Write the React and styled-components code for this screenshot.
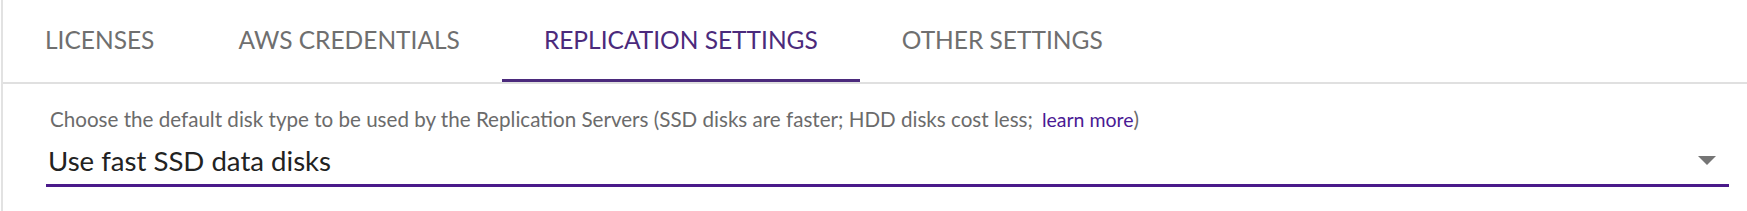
import React from "react";
import styled, { createGlobalStyle } from "styled-components";

const Global = createGlobalStyle`
  html, body { margin: 0; padding: 0; background: #fff; }
  body { font-family: Lato, "Open Sans", sans-serif; }
`;

const Frame = styled.div`
  margin-left: 1px;
  border-left: 2px solid #e2e2e2;
  height: 211px;
  box-sizing: border-box;
`;

const TabBar = styled.nav`
  display: flex;
  height: 84px;
  box-sizing: border-box;
  border-bottom: 2px solid #e0e0e0;
`;

const Tab = styled.div`
  display: flex;
  align-items: center;
  padding: 0 42px 3px;
  font-size: 24.5px;
  color: ${(p) => (p.$active ? "#4b2a7c" : "#6f6f6f")};
  box-shadow: ${(p) => (p.$active ? "inset 0 -3px 0 #4b2a7c" : "none")};
`;

const Content = styled.div`
  padding: 23px 18px 0 43px;
`;

const Helper = styled.div`
  font-size: 20.6px;
  line-height: 25px;
  color: #6b6b6b;
  padding-left: 4px;
`;

const Link = styled.a`
  color: #4a1a94;
  text-decoration: none;
  font-size: 19.5px;
  margin-left: 9px;
`;

const Select = styled.div`
  display: flex;
  align-items: flex-start;
  justify-content: space-between;
  height: 55px;
  box-sizing: border-box;
  border-bottom: 3px solid #4a1a8a;
  padding: 12px 13px 0 2px;
`;

const Value = styled.span`
  font-size: 27.6px;
  line-height: 33px;
  color: #222;
`;

const Arrow = styled.span`
  margin-top: 12px;
  width: 0;
  height: 0;
  border-left: 9px solid transparent;
  border-right: 9px solid transparent;
  border-top: 9px solid #757575;
`;

const tabs = ["LICENSES", "AWS CREDENTIALS", "REPLICATION SETTINGS", "OTHER SETTINGS"];

export default function App() {
  return (
    <>
      <Global />
      <Frame>
        <TabBar>
          {tabs.map((t, i) => (
            <Tab key={t} $active={i === 2}>
              {t}
            </Tab>
          ))}
        </TabBar>
        <Content>
          <Helper>
            Choose the default disk type to be used by the Replication Servers (SSD disks are faster; HDD disks cost less;
            <Link href="#">learn more</Link>)
          </Helper>
          <Select>
            <Value>Use fast SSD data disks</Value>
            <Arrow />
          </Select>
        </Content>
      </Frame>
    </>
  );
}
